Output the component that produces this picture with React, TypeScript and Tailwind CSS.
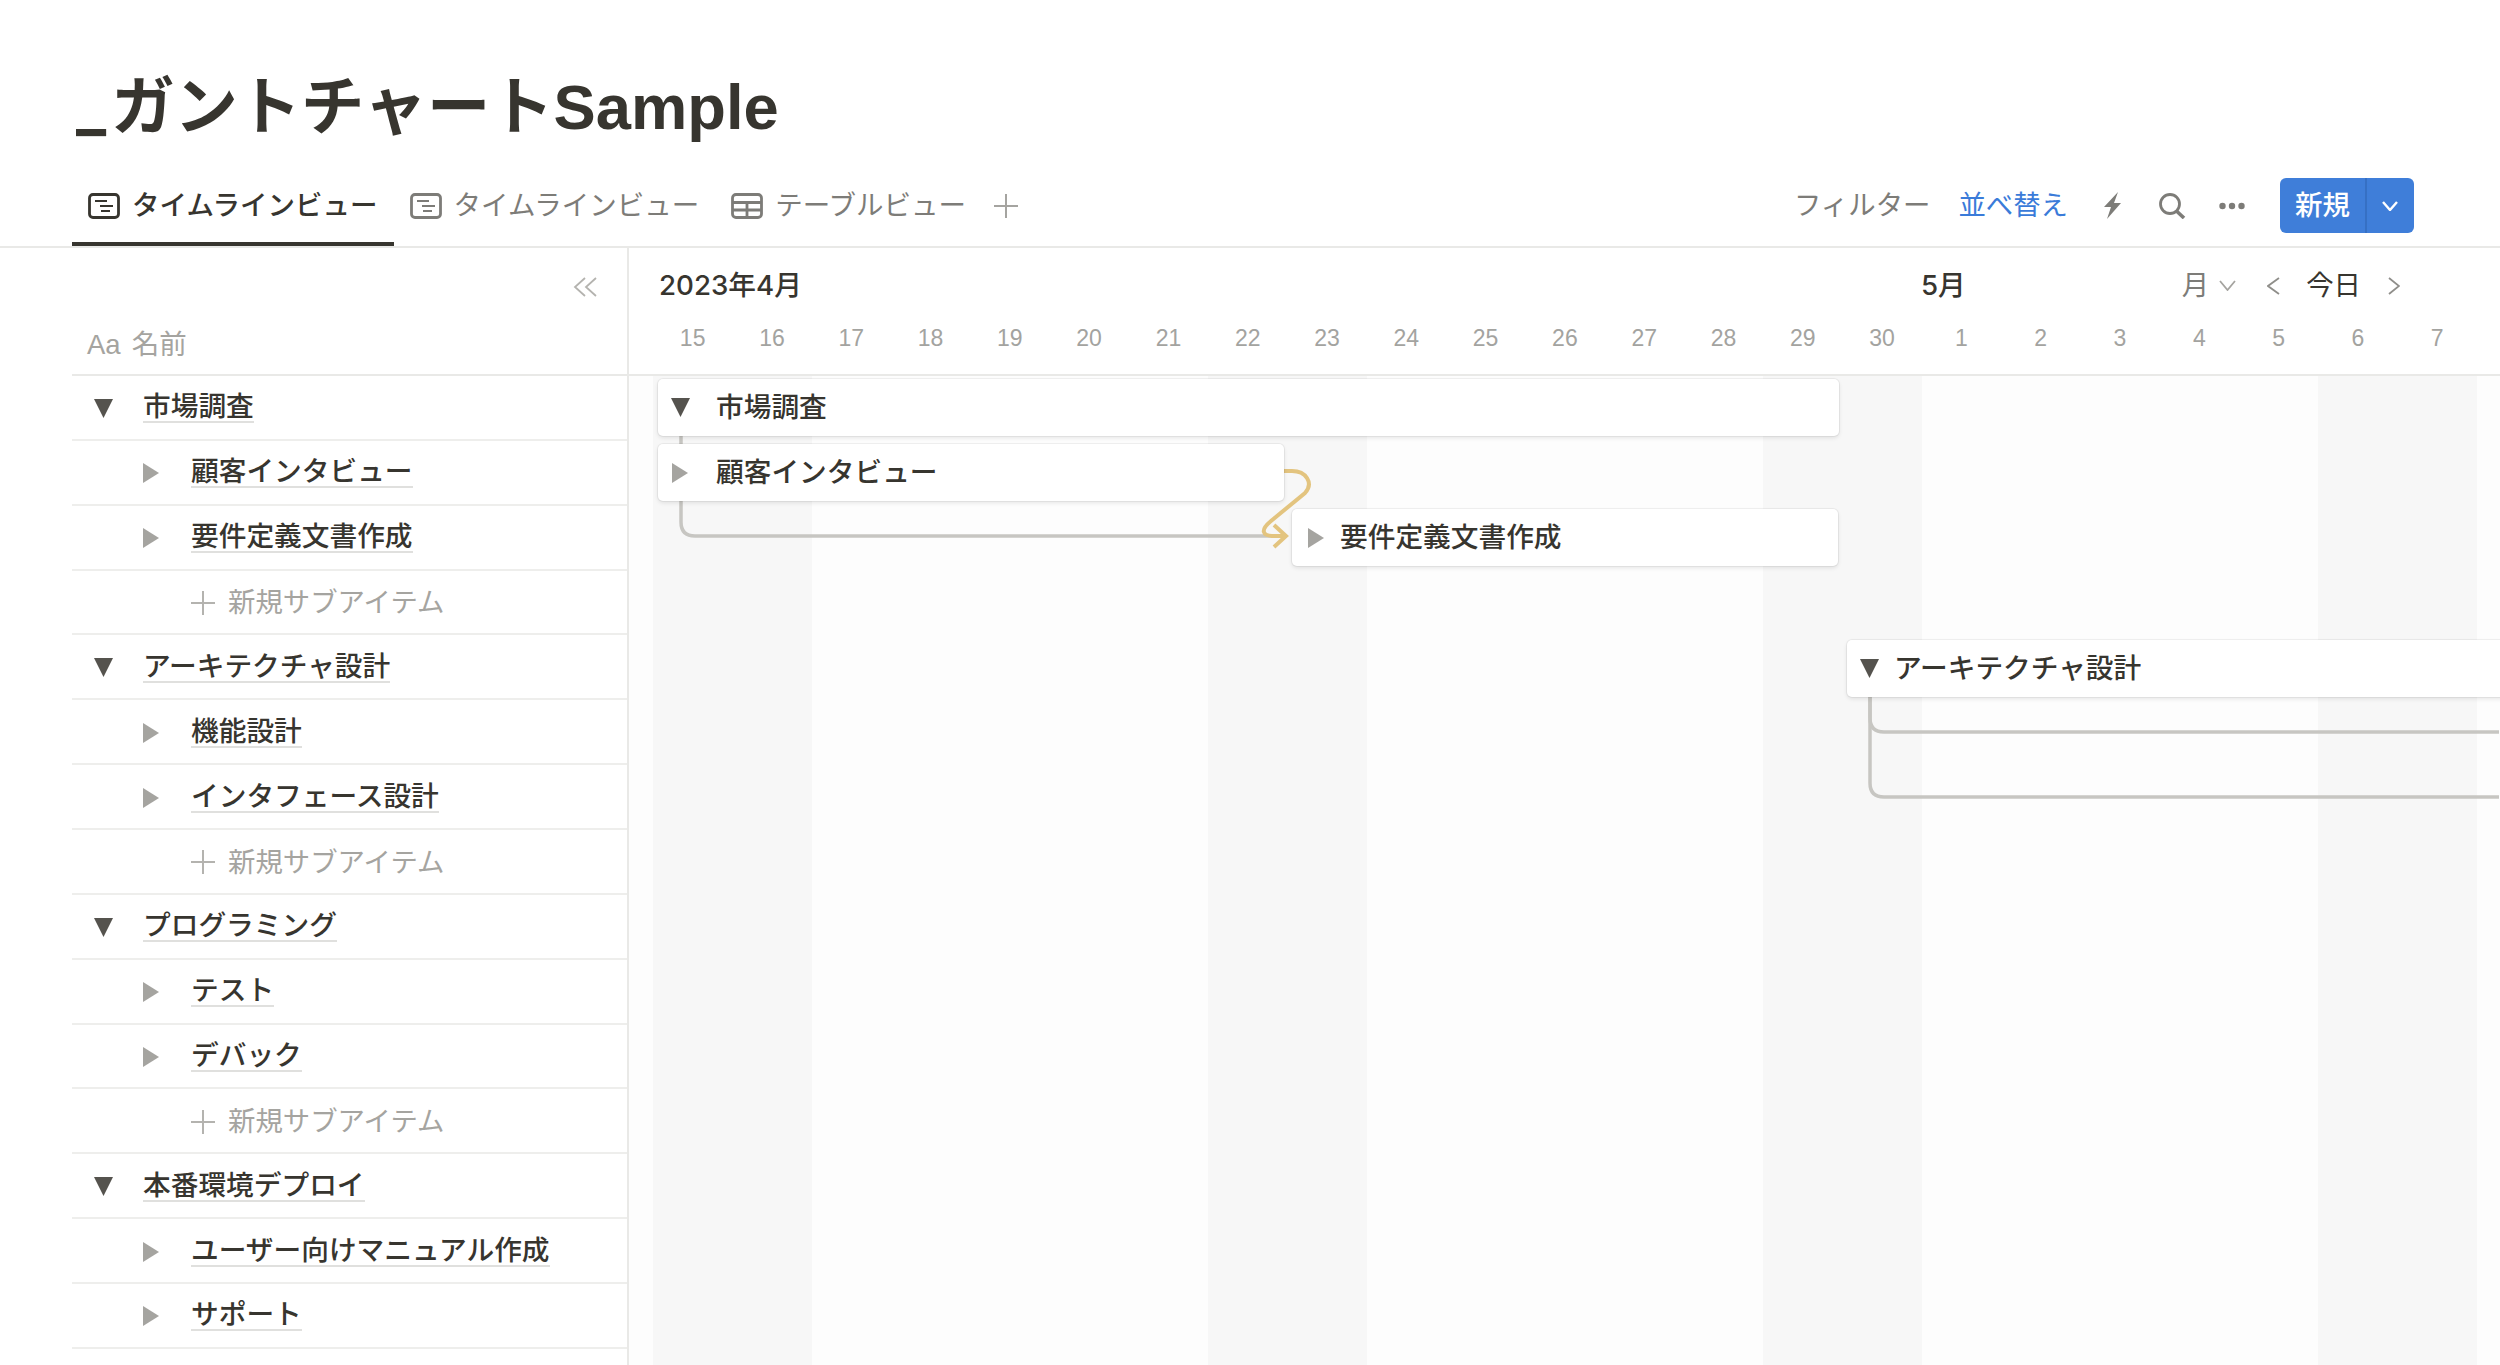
const font = "font-['Liberation_Sans','Noto_Sans_CJK_JP',sans-serif]"

// day columns on the timeline
const days = [15, 16, 17, 18, 19, 20, 21, 22, 23, 24, 25, 26, 27, 28, 29, 30, 1, 2, 3, 4, 5, 6, 7]
const weekend = [15, 16, 22, 23, 29, 30, 6, 7]

const rows = [
  { label: '市場調査', kind: 'parent' },
  { label: '顧客インタビュー', kind: 'child' },
  { label: '要件定義文書作成', kind: 'child' },
  { label: '新規サブアイテム', kind: 'add' },
  { label: 'アーキテクチャ設計', kind: 'parent' },
  { label: '機能設計', kind: 'child' },
  { label: 'インタフェース設計', kind: 'child' },
  { label: '新規サブアイテム', kind: 'add' },
  { label: 'プログラミング', kind: 'parent' },
  { label: 'テスト', kind: 'child' },
  { label: 'デバック', kind: 'child' },
  { label: '新規サブアイテム', kind: 'add' },
  { label: '本番環境デプロイ', kind: 'parent' },
  { label: 'ユーザー向けマニュアル作成', kind: 'child' },
  { label: 'サポート', kind: 'child' },
]

function TriDown() {
  return (
    <svg viewBox="0 0 19 19" className="w-[19px] h-[19px] shrink-0">
      <path d="M0 0h19L9.500 19z" fill="#55534e" />
    </svg>
  )
}

function TriRight() {
  return (
    <svg viewBox="0 0 16 20" className="w-[16px] h-[20px] shrink-0">
      <path d="M0 0l16 10-16 10z" fill="#a5a4a0" />
    </svg>
  )
}

function PlusIcon({ className }: { className: string }) {
  return (
    <svg width="24" height="24" viewBox="0 0 24 24" fill="none" stroke="currentColor" strokeWidth="2" className={className}>
      <path d="M0 12h24M12 0v24" />
    </svg>
  )
}

function Chevron({ dir, w, h, sw, className }: { dir: 'down' | 'left' | 'right'; w: number; h: number; sw: number; className: string }) {
  const d = dir === 'down' ? `M1 1L${w / 2} ${h - 1}L${w - 1} 1` : dir === 'left' ? `M${w - 1} 1L1 ${h / 2}L${w - 1} ${h - 1}` : `M1 1L${w - 1} ${h / 2}L1 ${h - 1}`
  return (
    <svg width={w} height={h} viewBox={`0 0 ${w} ${h}`} fill="none" stroke="currentColor" strokeWidth={sw} className={className}>
      <path d={d} />
    </svg>
  )
}

function TimelineIcon({ color }: { color: string }) {
  return (
    <svg width="32" height="26" viewBox="0 0 32 26" fill="none" stroke={color} strokeWidth="2.800" className="shrink-0">
      <rect x="1.500" y="1.500" width="29" height="23" rx="3.500" />
      <path d="M7 8h12M12 13h13M13 18h9" strokeWidth="2.200" />
    </svg>
  )
}

function TableIcon() {
  return (
    <svg width="32" height="26" viewBox="0 0 32 26" fill="none" stroke="#7d7c78" strokeWidth="2.800" className="shrink-0">
      <rect x="1.500" y="1.500" width="29" height="23" rx="3.500" />
      <path d="M1.500 9.500h29M1.500 17h29M16 9.500v15" />
    </svg>
  )
}

function Tab({ label, active, table }: { label: string; active?: boolean; table?: boolean }) {
  return (
    <div className={`h-[76px] flex items-center gap-[12px] px-[16px] border-b-[4px] ${active ? 'border-[#37352f] text-[#37352f] font-medium' : 'border-transparent text-[#7d7c78]'}`}>
      {table ? <TableIcon /> : <TimelineIcon color={active ? '#37352f' : '#7d7c78'} />}
      <span className="text-[27.500px] leading-none whitespace-nowrap">{label}</span>
    </div>
  )
}

function ListRow({ label, kind }: { label: string; kind: string }) {
  if (kind === 'add') {
    return (
      <div className="h-[64.870px] shrink-0 pt-[2px] border-b-2 border-[#eeeeec] flex items-center pl-[119px] text-[#a5a4a0]">
        <PlusIcon className="text-[#b4b3af] shrink-0" />
        <span className="ml-[13px] text-[27.400px]">{label}</span>
      </div>
    )
  }
  return (
    <div className={`h-[64.870px] shrink-0 pt-[2px] border-b-2 border-[#eeeeec] flex items-center ${kind === 'parent' ? 'pl-[22px]' : 'pl-[71px]'}`}>
      {kind === 'parent' ? <TriDown /> : <TriRight />}
      <span className={`${kind === 'parent' ? 'ml-[30px]' : 'ml-[32px]'} text-[27.700px] leading-[28px] font-medium text-[#37352f] border-b-2 border-[#e0e0de]`}>{label}</span>
    </div>
  )
}

function Bar({ label, left, top, width, pad, gap, open }: { label: string; left: number; top: number; width: number; pad: number; gap: number; open?: boolean }) {
  return (
    <div
      className="absolute h-[57px] bg-white rounded-[5px] shadow-[0_0_0_1px_rgba(15,15,15,0.05),0_2px_4px_rgba(15,15,15,0.1)] flex items-center text-[27.700px] font-medium text-[#37352f] whitespace-nowrap"
      style={{ left, top, width, paddingLeft: pad }}
    >
      {open ? <TriDown /> : <TriRight />}
      <span style={{ marginLeft: gap }}>{label}</span>
    </div>
  )
}

export default function App() {
  return (
    <div className={`${font} w-[2500px] h-[1365px] overflow-hidden bg-white flex flex-col`}>
      <h1 className="pl-[76px] pt-[66px] h-[170px] shrink-0 text-[63.300px] leading-[80px] font-bold text-[#37352f] whitespace-nowrap">
        <span className="font-['Inter'] mr-[5px]">_</span>ガントチャートSample
      </h1>

      {/* view tabs + toolbar */}
      <div className="h-[78px] shrink-0 border-b-2 border-[#e9e9e7] flex items-end pl-[72px] pr-[86px]">
        <Tab label="タイムラインビュー" active />
        <Tab label="タイムラインビュー" />
        <Tab label="テーブルビュー" table />
        <PlusIcon className="ml-[12px] mb-[28px] text-[#a5a4a0]" />
        <div className="ml-auto h-[55px] mb-[13px] flex items-center text-[27.400px]">
          <span className="text-[#7d7c78]">フィルター</span>
          <span className="ml-[28px] text-[#3a7bd9]">並べ替え</span>
          <svg width="19" height="27" viewBox="0 0 19 27" className="ml-[35px]">
            <path d="M15 0L1 15h7L4 27 18 11h-7z" fill="#7d7c78" />
          </svg>
          <svg width="28" height="26" viewBox="0 0 28 26" fill="none" stroke="#7d7c78" className="ml-[36px]">
            <circle cx="12" cy="11" r="9.500" strokeWidth="2.800" />
            <path d="M18.500 18L26 25" strokeWidth="3.600" />
          </svg>
          <svg width="26" height="8" viewBox="0 0 26 8" fill="#7d7c78" className="ml-[33px]">
            <circle cx="3.500" cy="4" r="3.200" />
            <circle cx="13" cy="4" r="3.200" />
            <circle cx="22.500" cy="4" r="3.200" />
          </svg>
          <div className="ml-[35px] w-[134px] h-[55px] rounded-[6px] bg-[#3f7ed9] text-white flex items-center">
            <span className="w-[87px] pl-[15px] font-medium border-r-2 border-[#3670c4] leading-[55px] text-[27.500px]">新規</span>
            <Chevron dir="down" w={16} h={10} sw={2.400} className="ml-[15px]" />
          </div>
        </div>
      </div>

      <div className="flex-1 flex min-h-0">
        {/* item list */}
        <div className="w-[555px] ml-[72px] shrink-0 border-r-2 border-[#e9e9e7] flex flex-col overflow-hidden box-content">
          <div className="h-[128px] shrink-0 border-b-2 border-[#e9e9e7] relative">
            <svg width="24" height="20" viewBox="0 0 24 20" fill="none" stroke="#b4b3af" strokeWidth="1.800" className="absolute right-[30px] top-[29px]">
              <path d="M12 1L2 10l10 9M23 1L13 10l10 9" />
            </svg>
            <div className="absolute left-[15px] top-[76px] flex gap-[11px] text-[27.500px] text-[#a5a4a0]">
              <span>Aa</span>
              <span>名前</span>
            </div>
          </div>
          {rows.map((r, i) => (
            <ListRow key={i} label={r.label} kind={r.kind} />
          ))}
        </div>

        {/* timeline */}
        <div className="flex-1 flex flex-col min-w-0 relative">
          <div className="h-[128px] shrink-0 border-b-2 border-[#e9e9e7] relative">
            <div className="absolute left-[30px] top-[17px] font-['Inter','Noto_Sans_CJK_JP',sans-serif] text-[27.700px] font-medium text-[#37352f]">2023年4月</div>
            <div className="absolute left-[1292px] top-[17px] font-['Inter','Noto_Sans_CJK_JP',sans-serif] text-[27.700px] font-medium text-[#37352f]">5月</div>
            <div className="absolute right-[100px] top-[17px] flex items-center text-[27.400px]">
              <span className="text-[#7d7c78]">月</span>
              <Chevron dir="down" w={17} h={11} sw={1.800} className="ml-[10px] text-[#a5a4a0]" />
              <Chevron dir="left" w={13} h={18} sw={1.800} className="ml-[31px] text-[#8f8e8a]" />
              <span className="ml-[26px] text-[#37352f]">今日</span>
              <Chevron dir="right" w={12} h={18} sw={1.800} className="ml-[27px] text-[#8f8e8a]" />
            </div>
            <div className="absolute left-[24px] top-[72px] flex">
              {days.map((d, i) => (
                <div key={i} className="w-[79.300px] shrink-0 text-center text-[23px] leading-[36px] text-[#a3a3a0]">{d}</div>
              ))}
            </div>
          </div>

          <div className="flex-1 relative overflow-hidden bg-[#fdfdfd]">
            <div className="absolute inset-0 pl-[24px] flex">
              {days.map((d, i) => (
                <div key={i} className={`w-[79.300px] shrink-0 ${weekend.includes(d) ? 'bg-[#f7f7f7]' : 'bg-[#fdfdfd]'}`} />
              ))}
            </div>

            {/* dependency lines */}
            <svg width="1870" height="990" className="absolute left-0 top-0" fill="none">
              <g stroke="#c7c6c2" strokeWidth="3.500">
                <path d="M52 60v10" />
                <path d="M52 120v26q0 14 14 14h590" />
                <path d="M1241 320v22q0 14 14 14h620" />
                <path d="M1241 320v87q0 14 14 14h620" />
              </g>
              <g stroke="#e3c47f" strokeWidth="4">
                <path d="M655 95h8c14 0 22 12 13 22l-34 28c-11 9-9 15 3 15h12" />
                <path d="M645 149l12 11-12 11" />
              </g>
            </svg>

            <Bar label="市場調査" left={29} top={3} width={1181} pad={13} gap={26} open />
            <Bar label="顧客インタビュー" left={29} top={68} width={626} pad={14} gap={28} />
            <Bar label="要件定義文書作成" left={663} top={133} width={546} pad={16} gap={16} />
            <Bar label="アーキテクチャ設計" left={1218} top={264} width={700} pad={13} gap={15} open />
          </div>
        </div>
      </div>
    </div>
  )
}
